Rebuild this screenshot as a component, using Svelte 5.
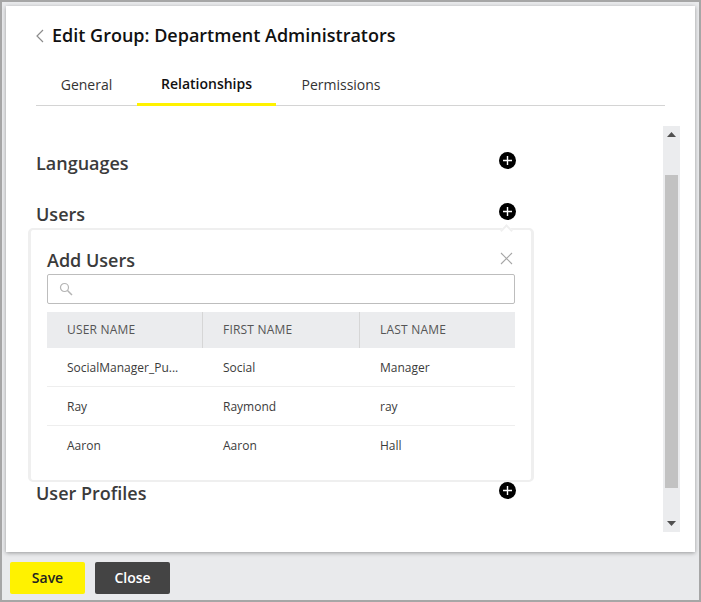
<script>
  const rows = [
    ['SocialManager_Pu...', 'Social', 'Manager'],
    ['Ray', 'Raymond', 'ray'],
    ['Aaron', 'Aaron', 'Hall']
  ];
  const sections = ['Languages', 'Users', 'User Profiles'];
</script>

<div class="page">
  <main class="card">
    <header class="title">
      <svg class="back" width="8" height="14" viewBox="0 0 8 14"><path d="M7 1 1 7l6 6" fill="none" stroke="#8c8c8c" stroke-width="1.2"/></svg>
      <h1>Edit Group: Department Administrators</h1>
    </header>
    <nav class="tabs">
      <span class="tab general">General</span>
      <span class="tab active">Relationships</span>
      <span class="tab perms">Permissions</span>
    </nav>
    <div class="scroll">
      <div class="content">
        {#each sections as s, i}
          <section class="sec s{i}">
            <h2>{s}</h2>
            <button class="plus" aria-label="Add {s}">
              <svg width="17" height="17" viewBox="0 0 17 17"><circle cx="8.5" cy="8.5" r="8.5" fill="#000"/><path d="M8.5 4v9M4 8.5h9" stroke="#fff" stroke-width="1.4"/></svg>
            </button>
          </section>
        {/each}
      </div>
      <div class="bar">
        <svg class="arrow" width="9" height="5" viewBox="0 0 9 5"><path d="M4.5 0 9 5H0z" fill="#505050"/></svg>
        <div class="track"><div class="thumb"></div></div>
        <svg class="arrow" width="9" height="5" viewBox="0 0 9 5"><path d="M0 0h9L4.500 5z" fill="#505050"/></svg>
      </div>
    </div>
    <div class="pop">
      <div class="nub"></div>
      <div class="pop-head">
        <h3>Add Users</h3>
        <svg class="close" width="13" height="13" viewBox="0 0 13 13"><path d="M1 1l11 11M12 1 1 12" stroke="#a6a6a6" stroke-width="1.1" fill="none"/></svg>
      </div>
      <div class="search">
        <svg width="14" height="14" viewBox="0 0 14 14"><circle cx="5.500" cy="5.500" r="4" fill="none" stroke="#b4b4b4" stroke-width="1.200"/><path d="M8.500 8.500 13 13" stroke="#b4b4b4" stroke-width="1.500"/></svg>
      </div>
      <div class="thead">
        <div>USER NAME</div><div>FIRST NAME</div><div>LAST NAME</div>
      </div>
      {#each rows as r}
        <div class="row">
          {#each r as c}<div>{c}</div>{/each}
        </div>
      {/each}
    </div>
  </main>
  <footer class="foot">
    <button class="btn save">Save</button>
    <button class="btn shut">Close</button>
  </footer>
</div>

<style>
  :global(body) { margin: 0; font-family: "Open Sans", sans-serif; }
  .page {
    width: 701px; height: 602px; box-sizing: border-box;
    border: 2px solid #a6a6a6; background: #e9eaec;
    display: flex; flex-direction: column;
  }
  .card {
    position: relative; box-sizing: border-box;
    margin: 4px 4px 0 4px; height: 546px; background: #fff;
    box-shadow: 0 1px 4px rgba(0,0,0,.35);
    padding: 0 0 0 30px;
  }
  .title { display: flex; align-items: center; height: 58px; }
  .back { margin-right: 8px; margin-top: 2px; }
  h1 { margin: 0; font-size: 18px; font-weight: 600; color: #111; line-height: 1; }
  .tabs {
    display: flex; width: 629px; height: 41px; margin-top: 1px; box-sizing: border-box;
    border-bottom: 1px solid #d4d4d4; font-size: 14px;
  }
  .tab { display: block; text-align: center; color: #333; line-height: 40px; box-sizing: border-box; }
  .general { width: 101px; }
  .active {
    width: 139px; font-weight: 600; color: #111; line-height: 38px;
    border-bottom: 3px solid #fff200; height: 41px;
  }
  .perms { width: 130px; }
  .scroll { display: flex; margin-top: 20px; height: 406px; width: 644px; }
  .content { width: 627px; padding-top: 14px; box-sizing: border-box; }
  .sec { display: flex; width: 480px; justify-content: space-between; height: 51px; }
  .sec.s1 { height: 279px; }
  h2 { margin: 0; font-size: 18px; font-weight: 600; color: #3b3b3b; line-height: 46px; height: 46px; }
  .plus { border: 0; background: none; padding: 0; width: 17px; height: 17px; margin-top: 12px; display: block; }
  .plus svg { display: block; }
  .bar {
    width: 17px; background: #ebecee; display: flex; flex-direction: column; align-items: center;
  }
  .arrow { flex: none; margin: 6px 0; }
  .track { flex: 1; width: 13px; padding: 32px 0 27px; box-sizing: border-box; display: flex; }
  .thumb { flex: 1; background: #c2c2c2; }
  .pop {
    position: absolute; left: 22px; top: 222px; width: 506px; height: 254px; box-sizing: border-box;
    background: #fff; border: solid #efefef; border-width: 2px 3px; border-radius: 5px;
    padding: 0 16px;
  }
  .nub {
    position: absolute; left: 471px; top: -4px; width: 7px; height: 7px;
    background: #fff; transform: rotate(45deg);
    border-left: 2px solid #efefef; border-top: 2px solid #efefef;
  }
  .pop-head { display: flex; justify-content: space-between; height: 44px; position: relative; }
  h3 { margin: 0; font-size: 18px; font-weight: 600; color: #3b3b3b; line-height: 24px; padding-top: 18px; }
  .close { margin: 22px 2px 0 0; }
  .search {
    height: 30px; box-sizing: border-box; border: 1px solid #bdbdbd; border-radius: 2px;
    display: flex; align-items: center; padding-left: 11px;
  }
  .thead, .row { display: grid; grid-template-columns: 156px 157px 155px; }
  .thead {
    margin-top: 8px; background: #ebecee; height: 36px;
    font-size: 12px; letter-spacing: .2px; color: #555; align-items: center;
  }
  .thead div { padding-left: 20px; line-height: 36px; border-right: 1px solid #d6d6d6; }
  .thead div:last-child { border-right: 0; }
  .row {
    height: 39px; border-bottom: 1px solid #eeeeee; font-size: 12px; color: #3b3b3b; line-height: 40px; box-sizing: border-box;
  }
  .row:last-child { border-bottom: 0; }
  .row div { padding-left: 20px; }
  .foot { flex: 1; display: flex; gap: 10px; padding: 10px 0 0 8px; box-sizing: border-box; }
  .btn {
    width: 75px; height: 32px; border: 0; border-radius: 2px; font-family: inherit;
    font-size: 14px; font-weight: 600; padding: 0 0 1px;
  }
  .save { background: #fff200; color: #222; }
  .shut { background: #444; color: #fff; }
</style>
